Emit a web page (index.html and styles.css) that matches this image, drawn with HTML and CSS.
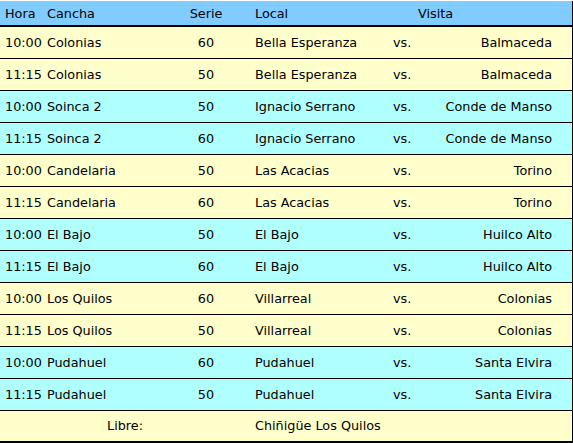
FILE: index.html
```html
<!DOCTYPE html>
<html lang="es">
<head>
<meta charset="utf-8">
<title>Programación</title>
<link rel="stylesheet" href="styles.css">
</head>
<body>
<table class="fixture">
  <colgroup>
    <col class="c-hora"><col class="c-cancha"><col class="c-serie"><col class="c-local"><col class="c-vs"><col class="c-visita">
  </colgroup>
  <thead>
    <tr>
      <th class="hora">Hora</th>
      <th class="cancha">Cancha</th>
      <th class="serie">Serie</th>
      <th class="local">Local</th>
      <th class="vs"></th>
      <th class="visita-h">Visita</th>
    </tr>
  </thead>
  <tbody>
    <tr class="y"><td class="hora">10:00</td><td class="cancha">Colonias</td><td class="serie">60</td><td class="local">Bella Esperanza</td><td class="vs">vs.</td><td class="visita">Balmaceda</td></tr>
    <tr class="y"><td class="hora">11:15</td><td class="cancha">Colonias</td><td class="serie">50</td><td class="local">Bella Esperanza</td><td class="vs">vs.</td><td class="visita">Balmaceda</td></tr>
    <tr class="c"><td class="hora">10:00</td><td class="cancha">Soinca 2</td><td class="serie">50</td><td class="local">Ignacio Serrano</td><td class="vs">vs.</td><td class="visita">Conde de Manso</td></tr>
    <tr class="c"><td class="hora">11:15</td><td class="cancha">Soinca 2</td><td class="serie">60</td><td class="local">Ignacio Serrano</td><td class="vs">vs.</td><td class="visita">Conde de Manso</td></tr>
    <tr class="y"><td class="hora">10:00</td><td class="cancha">Candelaria</td><td class="serie">50</td><td class="local">Las Acacias</td><td class="vs">vs.</td><td class="visita">Torino</td></tr>
    <tr class="y"><td class="hora">11:15</td><td class="cancha">Candelaria</td><td class="serie">60</td><td class="local">Las Acacias</td><td class="vs">vs.</td><td class="visita">Torino</td></tr>
    <tr class="c"><td class="hora">10:00</td><td class="cancha">El Bajo</td><td class="serie">50</td><td class="local">El Bajo</td><td class="vs">vs.</td><td class="visita">Huilco Alto</td></tr>
    <tr class="c"><td class="hora">11:15</td><td class="cancha">El Bajo</td><td class="serie">60</td><td class="local">El Bajo</td><td class="vs">vs.</td><td class="visita">Huilco Alto</td></tr>
    <tr class="y"><td class="hora">10:00</td><td class="cancha">Los Quilos</td><td class="serie">60</td><td class="local">Villarreal</td><td class="vs">vs.</td><td class="visita">Colonias</td></tr>
    <tr class="y"><td class="hora">11:15</td><td class="cancha">Los Quilos</td><td class="serie">50</td><td class="local">Villarreal</td><td class="vs">vs.</td><td class="visita">Colonias</td></tr>
    <tr class="c"><td class="hora">10:00</td><td class="cancha">Pudahuel</td><td class="serie">60</td><td class="local">Pudahuel</td><td class="vs">vs.</td><td class="visita">Santa Elvira</td></tr>
    <tr class="c"><td class="hora">11:15</td><td class="cancha">Pudahuel</td><td class="serie">50</td><td class="local">Pudahuel</td><td class="vs">vs.</td><td class="visita">Santa Elvira</td></tr>
    <tr class="y last"><td class="libre" colspan="2">Libre:</td><td class="serie"></td><td class="local" colspan="3">Chiñigüe Los Quilos</td></tr>
  </tbody>
</table>
</body>
</html>
```
FILE: styles.css
```css
html, body {
  margin: 0;
  padding: 0;
  background: #ffffff;
}
body {
  padding-top: 1px;
}
.fixture {
  width: 573px;
  table-layout: fixed;
  border-collapse: collapse;
  font-family: "DejaVu Sans", Verdana, sans-serif;
  font-size: 12.8px;
  color: #000;
}
.c-hora { width: 47px; }
.c-cancha { width: 128px; }
.c-serie { width: 62px; }
.c-local { width: 156px; }
.c-vs { width: 25px; }
.c-visita { width: 155px; }

.fixture th, .fixture td {
  padding: 0;
  white-space: nowrap;
  overflow: hidden;
}
.fixture tr > *:last-child {
  border-right: 2px solid #000;
}
.fixture thead tr {
  background: #80ccff;
  height: 25px;
  border-bottom: 2px solid #000;
}
.fixture th {
  font-weight: normal;
  text-align: left;
  vertical-align: middle;
}
.fixture tbody tr {
  height: 32px;
  border-bottom: 1px solid #000;
}
.fixture tbody tr.last {
  border-bottom: 2px solid #000;
  height: 32px;
}
.y { background: #ffffcc; }
.c { background: #b0ffff; }

.hora { padding-left: 5px !important; }
.serie { text-align: center !important; }
.local { padding-left: 18px !important; }
.visita { text-align: right; padding-right: 20px !important; }
.visita-h { text-align: left; }
.libre { text-align: right; padding-right: 32px !important; }
```
